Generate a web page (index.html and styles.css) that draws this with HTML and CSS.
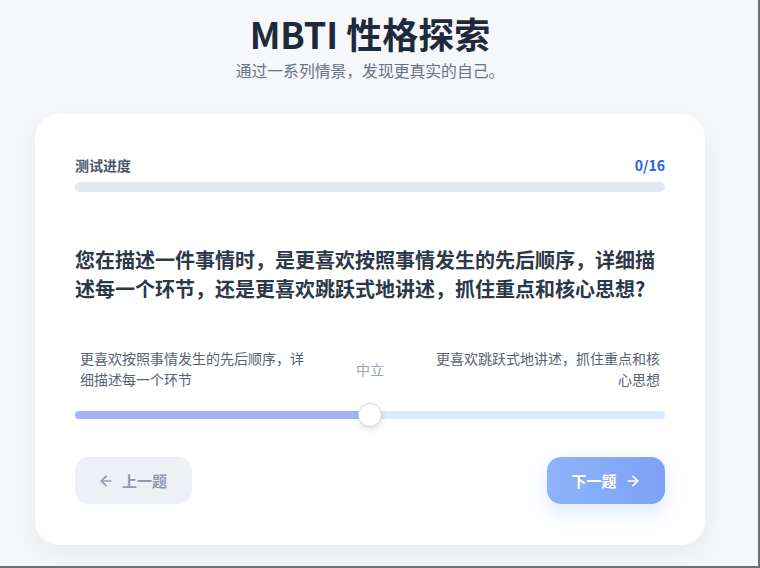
FILE: index.html
```html
<!DOCTYPE html>
<html lang="zh-CN">
<head>
<meta charset="UTF-8" />
<meta name="viewport" content="width=device-width, initial-scale=1" />
<title>MBTI 性格探索</title>
<link rel="stylesheet" href="styles.css">
</head>
<body>
<div class="screen">
    <div class="page">
        <h1 class="title">MBTI 性格探索</h1>
        <p class="subtitle">通过一系列情景，发现更真实的自己。</p>

        <div class="card">
            <div class="progress-head">
                <span>测试进度</span>
                <span class="count">0/16</span>
            </div>
            <div class="progress-bar"><div class="progress-fill" style="width: 0%"></div></div>

            <h2 class="question">您在描述一件事情时，是更喜欢按照事情发生的先后顺序，详细描述每一个环节，还是更喜欢跳跃式地讲述，抓住重点和核心思想?</h2>

            <div class="scale-labels">
                <span class="side left">更喜欢按照事情发生的先后顺序，详细描述每一个环节</span>
                <span class="middle">中立</span>
                <span class="side right">更喜欢跳跃式地讲述，抓住重点和核心思想</span>
            </div>

            <div class="slider">
                <div class="slider-fill" style="width: 50%"></div>
                <div class="slider-thumb" style="left: 50%"></div>
            </div>

            <div class="actions">
                <button class="btn prev">
                    <svg width="16" height="16" viewBox="0 0 24 24" fill="none" stroke="currentColor" stroke-width="2.6" stroke-linecap="round" stroke-linejoin="round"><path d="M19 12H5"/><path d="M12 19l-7-7 7-7"/></svg>
                    上一题
                </button>
                <button class="btn next">
                    下一题
                    <svg width="16" height="16" viewBox="0 0 24 24" fill="none" stroke="currentColor" stroke-width="2.6" stroke-linecap="round" stroke-linejoin="round"><path d="M5 12h14"/><path d="M12 5l7 7-7 7"/></svg>
                </button>
            </div>
        </div>
    </div>
</div>
</body>
</html>
```

FILE: styles.css
```css
body {
    margin: 0;
    font-family: "Noto Sans CJK SC", "Noto Sans", sans-serif;
}
.screen {
    width: 760px;
    height: 568px;
    box-sizing: border-box;
    border-right: 2px solid #6f7075;
    border-bottom: 2px solid #6f7075;
    background: #f5f7fa;
    overflow: hidden;
}
.page {
    width: 740px;
    text-align: center;
}
.title {
    margin: 11px 0 0;
    font-size: 36px;
    line-height: 44px;
    font-weight: 700;
    color: #1e293b;
}
.subtitle {
    margin: 5px 0 0;
    font-size: 15.8px;
    line-height: 22px;
    color: #64748b;
}
.card {
    margin: 32px 35px 0;
    padding: 40px 40px 41px;
    background: #fff;
    border-radius: 24px;
    box-shadow: 0 10px 30px rgba(15, 23, 42, 0.06);
    text-align: left;
}
.progress-head {
    display: flex;
    justify-content: space-between;
    font-size: 14px;
    line-height: 22px;
    font-weight: 600;
    color: #475569;
}
.progress-head .count {
    color: #2563eb;
    font-weight: 700;
}
.progress-bar {
    margin-top: 6px;
    height: 10px;
    border-radius: 5px;
    background: #e2e8f0;
    overflow: hidden;
}
.progress-fill {
    height: 100%;
    background: #3b82f6;
}
.question {
    margin: 54px 0 0;
    font-size: 20px;
    line-height: 28.5px;
    font-weight: 700;
    color: #2d3748;
}
.scale-labels {
    margin-top: 45px;
    display: flex;
    justify-content: space-between;
    align-items: center;
}
.side {
    flex: 0 0 40%;
    box-sizing: border-box;
    padding: 0 5px;
    font-size: 14px;
    line-height: 21px;
    color: #566176;
}
.side.right {
    text-align: right;
}
.middle {
    font-size: 14px;
    color: #94a3b8;
}
.slider {
    position: relative;
    margin-top: 21px;
    height: 8px;
    border-radius: 4px;
    background: #dbeafe;
}
.slider-fill {
    height: 100%;
    border-radius: 4px 0 0 4px;
    background: #a5b4f7;
}
.slider-thumb {
    position: absolute;
    top: 50%;
    width: 22px;
    height: 22px;
    margin: -12px 0 0 -12px;
    border-radius: 50%;
    background: #fff;
    border: 1px solid #d4d8de;
    box-shadow: 0 2px 6px rgba(0, 0, 0, 0.12);
}
.actions {
    margin-top: 38px;
    display: flex;
    justify-content: space-between;
}
.btn {
    display: flex;
    align-items: center;
    gap: 8px;
    height: 47px;
    padding: 0 23px;
    border: none;
    border-radius: 14px;
    font-family: inherit;
    font-size: 15px;
    font-weight: 700;
    cursor: pointer;
}
.btn.prev {
    width: 117px;
    background: #edf0f5;
    color: #8f9aae;
}
.btn.next {
    width: 118px;
    justify-content: center;
    background: linear-gradient(90deg, #8db4fa, #7ea1f5);
    color: #fff;
    box-shadow: 0 8px 20px rgba(59, 130, 246, 0.18);
}
```
